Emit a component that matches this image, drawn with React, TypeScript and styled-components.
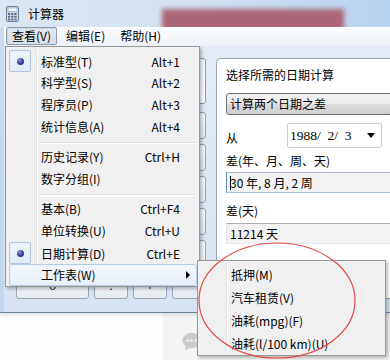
import React from "react";
import styled, { createGlobalStyle } from "styled-components";

const Global = createGlobalStyle`
  html, body { margin: 0; padding: 0; }
  body {
    background: #fcfcfc;
    font-family: "Noto Sans CJK SC", "Noto Sans", sans-serif;
    font-size: 12px;
    color: #000;
  }
`;

const Page = styled.div`
  position: relative;
  width: 390px;
  height: 360px;
  overflow: hidden;
  background: linear-gradient(to right, #fdfdfd 0, #fdfdfd 163px, #f4f4f4 163px);
`;

const Window = styled.div`
  width: 420px;
  height: 313px;
  display: flex;
  flex-direction: column;
  background: linear-gradient(#cbdcef, #c2d6ec);
  border-bottom: 1px solid #71839a;
  box-shadow: 0 2px 4px rgba(0, 0, 0, 0.12);
  box-sizing: border-box;
`;

const TitleBar = styled.div`
  position: relative;
  height: 27px;
  flex: none;
  display: flex;
  align-items: center;
  gap: 9px;
  padding-left: 6px;
  overflow: hidden;
  background: linear-gradient(to right, #dbe6f2 0%, #d3e1f0 45%, #b4d1ee 100%);
  &::before {
    content: "";
    position: absolute;
    left: 162px;
    top: 9px;
    width: 182px;
    height: 24px;
    background: #ab6576;
    filter: blur(2.5px);
  }
`;

const TitleText = styled.span`
  position: relative;
  z-index: 1;
  line-height: 16px;
`;

const IconWrap = styled.span`
  position: relative;
  z-index: 1;
  display: flex;
`;

const Body = styled.div`
  flex: 1;
  display: flex;
  flex-direction: column;
  margin-left: 4px;
`;

const MenuBar = styled.div`
  height: 19px;
  flex: none;
  display: flex;
  gap: 3px;
  padding-left: 2px;
  background: linear-gradient(#fbfcfe, #eef3f9);
  border-top: 1px solid #ffffff;
  box-sizing: border-box;
`;

const MenuBarItem = styled.div<{ $open?: boolean }>`
  height: 18px;
  padding: 0 5px;
  border: 1px solid ${(p) => (p.$open ? "#8d9db1" : "transparent")};
  border-radius: 2px;
  background: ${(p) => (p.$open ? "linear-gradient(#e4e9ef, #d8dfe8)" : "transparent")};
  box-shadow: ${(p) => (p.$open ? "inset 1px 1px 1px rgba(0,0,0,0.08)" : "none")};
  line-height: 16px;
  box-sizing: border-box;
  margin-top: -1px;
`;

const Client = styled.div`
  flex: 1;
  display: flex;
  gap: 10px;
  padding: 12px 0 13px 0;
  background: linear-gradient(#e2ebf6, #d7e3f2);
`;

const StdPanel = styled.div`
  width: 190px;
  flex: none;
  padding-left: 12px;
  display: flex;
  flex-direction: column;
  gap: 8px;
`;

const Display = styled.div`
  height: 46px;
  border: 1px solid #8e9db0;
  border-radius: 3px;
  background: linear-gradient(#f4f8fc, #ffffff);
  box-sizing: border-box;
`;

const KeyGrid = styled.div`
  display: grid;
  grid-template-columns: repeat(5, 34px);
  grid-auto-rows: 27px;
  gap: 5px;
`;

const Key = styled.div<{ $wide?: boolean; $tall?: boolean }>`
  grid-column: ${(p) => (p.$wide ? "span 2" : "auto")};
  grid-row: ${(p) => (p.$tall ? "span 2" : "auto")};
  display: flex;
  align-items: center;
  justify-content: center;
  border: 1px solid #9aa5b3;
  border-radius: 3px;
  background: linear-gradient(#f7f9fb, #e6ebf1);
  font-family: "Liberation Sans", sans-serif;
  font-size: 13px;
  color: #1a1a1a;
  box-sizing: border-box;
`;

const DatePanel = styled.div`
  flex: 1;
  border: 1px solid #9aa6b5;
  border-radius: 4px;
  background: #ffffff;
  padding: 8px 9px 0 9px;
  display: flex;
  flex-direction: column;
`;

const Label = styled.div<{ $gap?: number }>`
  line-height: 16px;
  margin-top: ${(p) => p.$gap ?? 0}px;
`;

const Combo = styled.div`
  height: 22px;
  margin-top: 10px;
  border: 1px solid #707070;
  border-radius: 3px;
  background: linear-gradient(#f3f3f3 0%, #ebebeb 50%, #dddddd 51%, #cfcfcf 100%);
  padding-left: 3px;
  line-height: 20px;
  box-sizing: border-box;
`;

const FromRow = styled.div`
  display: flex;
  align-items: flex-end;
  margin-top: 8px;
`;

const FromLabel = styled.div`
  width: 61px;
  line-height: 16px;
  margin-bottom: 2px;
`;

const DatePicker = styled.div`
  width: 95px;
  height: 25px;
  border: 1px solid #c9ccd1;
  border-radius: 2px;
  display: flex;
  align-items: center;
  justify-content: space-between;
  padding: 0 6px 0 2px;
  box-sizing: border-box;
  background: #fff;
`;

const DateText = styled.span`
  font-family: "Liberation Serif", serif;
  font-size: 13.5px;
  white-space: pre;
`;

const DropArrow = styled.span`
  width: 0;
  height: 0;
  border-left: 4px solid transparent;
  border-right: 4px solid transparent;
  border-top: 5px solid #000;
`;

const TextBox = styled.div<{ $focus?: boolean; $gap: number }>`
  height: 21px;
  margin-top: ${(p) => p.$gap}px;
  border: 1px solid;
  border-color: ${(p) =>
    p.$focus ? "#a9b8c9 #b7d0e8 #a5c8e6 #5f8fbf" : "#abadb3 #dbdfe6 #e3e9ef #e2e3ea"};
  background: #f3f3f3;
  padding-left: 3px;
  line-height: 19px;
  display: flex;
  align-items: center;
  box-sizing: border-box;
`;

const Caret = styled.span`
  display: inline-block;
  width: 1px;
  height: 14px;
  background: #000;
  margin-right: -1px;
`;

const Footer = styled.div`
  padding: 19px 0 0 182px;
  display: flex;
`;

const DropMenu = styled.div`
  position: absolute;
  left: 5px;
  top: 46px;
  width: 195px;
  height: 241px;
  box-sizing: border-box;
  border: 1px solid #979797;
  background: #f0f0f0;
  padding: 3px 2px 1px 3px;
  box-shadow: 2px 2px 3px rgba(0, 0, 0, 0.25);
  &::before {
    content: "";
    position: absolute;
    left: 30px;
    top: 2px;
    bottom: 2px;
    width: 1px;
    background: #e2e3e3;
    box-shadow: 1px 0 0 #ffffff;
  }
`;

const SubMenu = styled.div`
  position: absolute;
  left: 197px;
  top: 260px;
  width: 189px;
  height: 96px;
  box-sizing: border-box;
  border: 1px solid #979797;
  background: #f0f0f0;
  padding: 2px 2px 0 2px;
  box-shadow: 2px 2px 3px rgba(0, 0, 0, 0.25);
  &::before {
    content: "";
    position: absolute;
    left: 28px;
    top: 2px;
    bottom: 2px;
    width: 1px;
    background: #e2e3e3;
    box-shadow: 1px 0 0 #ffffff;
  }
`;

const MenuRow = styled.div<{ $hot?: boolean; $h: number; $lead: number }>`
  position: relative;
  height: ${(p) => p.$h}px;
  display: grid;
  grid-template-columns: ${(p) => p.$lead}px 1fr auto 16px;
  align-items: center;
  box-sizing: border-box;
  border: 1px solid ${(p) => (p.$hot ? "#b3cbe6" : "transparent")};
  border-radius: 3px;
  background: ${(p) => (p.$hot ? "linear-gradient(#f3f7fc, #e7eff8)" : "transparent")};
  line-height: 16px;
  z-index: 1;
`;

const Lead = styled.div`
  display: flex;
  align-items: center;
  justify-content: flex-start;
  height: 100%;
  margin-left: -1px;
`;

const CheckBox = styled.div`
  width: 22px;
  height: 22px;
  box-sizing: border-box;
  border: 1px solid #aec6e4;
  border-radius: 2px;
  background: linear-gradient(#edf3fa, #e1eaf6);
  display: flex;
  align-items: center;
  justify-content: center;
  margin-top: -1px;
`;

const Bullet = styled.div`
  width: 7px;
  height: 7px;
  border-radius: 50%;
  background: radial-gradient(circle at 35% 30%, #8b8fd8 0%, #3b3c97 55%, #1e1f5e 100%);
`;

const Shortcut = styled.span`
  text-align: right;
`;

const SubArrow = styled.span`
  justify-self: center;
  width: 0;
  height: 0;
  border-top: 4px solid transparent;
  border-bottom: 4px solid transparent;
  border-left: 4px solid #000;
`;

const Separator = styled.div`
  height: 8px;
  position: relative;
  &::after {
    content: "";
    position: absolute;
    left: 29px;
    right: 0;
    top: 4px;
    height: 1px;
    background: #e0e0e0;
    box-shadow: 0 1px 0 #ffffff;
  }
`;

const Annotation = styled.svg`
  position: absolute;
  left: 0;
  top: 0;
  pointer-events: none;
  z-index: 5;
`;

const CalcIcon = () => (
  <svg width="13" height="16" viewBox="0 0 13 16">
    <rect x="0.5" y="0.5" width="12" height="15" rx="1.5" fill="#d2dbe6" stroke="#6f8198" />
    <rect x="2" y="2" width="9" height="3.5" fill="#f6f9fc" stroke="#8e9db1" strokeWidth="0.6" />
    {[0, 1, 2].map((r) =>
      [0, 1, 2].map((c) => (
        <rect
          key={`${r}-${c}`}
          x={2 + c * 3.2}
          y={7 + r * 2.8}
          width="2.2"
          height="1.8"
          fill={r === 2 && c === 2 ? "#3d78c0" : "#56677f"}
        />
      ))
    )}
  </svg>
);

const ChatIcon = () => (
  <svg width="19" height="19" viewBox="0 0 19 19">
    <ellipse cx="9.5" cy="8.5" rx="9" ry="7.8" fill="#cacaca" />
    <path d="M4 14 L3 18.5 L8.5 15.5 Z" fill="#cacaca" />
    <circle cx="5.5" cy="8.5" r="1.3" fill="#f4f4f4" />
    <circle cx="9.5" cy="8.5" r="1.3" fill="#f4f4f4" />
    <circle cx="13.5" cy="8.5" r="1.3" fill="#f4f4f4" />
  </svg>
);

const keys: { t: string; wide?: boolean; tall?: boolean }[] = [
  "MC", "MR", "MS", "M+", "M-",
  "←", "CE", "C", "±", "√",
  "7", "8", "9", "/", "%",
  "4", "5", "6", "*", "1/x",
  "1", "2", "3", "-",
].map((t) => ({ t }));
keys.push({ t: "=", tall: true }, { t: "0", wide: true }, { t: "." }, { t: "+" });

type Item =
  | { sep: true }
  | { label: string; key?: string; checked?: boolean; hot?: boolean; sub?: boolean };

const viewItems: Item[] = [
  { label: "标准型(T)", key: "Alt+1", checked: true },
  { label: "科学型(S)", key: "Alt+2" },
  { label: "程序员(P)", key: "Alt+3" },
  { label: "统计信息(A)", key: "Alt+4" },
  { sep: true },
  { label: "历史记录(Y)", key: "Ctrl+H" },
  { label: "数字分组(I)" },
  { sep: true },
  { label: "基本(B)", key: "Ctrl+F4" },
  { label: "单位转换(U)", key: "Ctrl+U" },
  { label: "日期计算(D)", key: "Ctrl+E", checked: true },
  { label: "工作表(W)", hot: true, sub: true },
];

const sheetItems = ["抵押(M)", "汽车租赁(V)", "油耗(mpg)(F)", "油耗(l/100 km)(U)"];

export default function App() {
  return (
    <Page>
      <Global />
      <Window>
        <TitleBar>
          <IconWrap>
            <CalcIcon />
          </IconWrap>
          <TitleText>计算器</TitleText>
        </TitleBar>
        <Body>
          <MenuBar>
            <MenuBarItem $open>查看(V)</MenuBarItem>
            <MenuBarItem>编辑(E)</MenuBarItem>
            <MenuBarItem>帮助(H)</MenuBarItem>
          </MenuBar>
          <Client>
            <StdPanel>
              <Display />
              <KeyGrid>
                {keys.map((k, i) => (
                  <Key key={i} $wide={k.wide} $tall={k.tall}>
                    {k.t}
                  </Key>
                ))}
              </KeyGrid>
            </StdPanel>
            <DatePanel>
              <Label>选择所需的日期计算</Label>
              <Combo>计算两个日期之差</Combo>
              <FromRow>
                <FromLabel>从</FromLabel>
                <DatePicker>
                  <DateText>{"1988/  2/  3"}</DateText>
                  <DropArrow />
                </DatePicker>
              </FromRow>
              <Label $gap={5}>差(年、月、周、天)</Label>
              <TextBox $focus $gap={3}>
                <Caret />
                30 年, 8 月, 2 周
              </TextBox>
              <Label $gap={10}>差(天)</Label>
              <TextBox $gap={4}>11214 天</TextBox>
            </DatePanel>
          </Client>
        </Body>
      </Window>
      <Footer>
        <ChatIcon />
      </Footer>

      <DropMenu>
        {viewItems.map((it, i) =>
          "sep" in it ? (
            <Separator key={i} />
          ) : (
            <MenuRow key={i} $hot={it.hot} $h={22} $lead={31}>
              <Lead>
                {it.checked && (
                  <CheckBox>
                    <Bullet />
                  </CheckBox>
                )}
              </Lead>
              <span>{it.label}</span>
              <Shortcut>{it.key ?? ""}</Shortcut>
              {it.sub ? <SubArrow /> : <span />}
            </MenuRow>
          )
        )}
      </DropMenu>

      <SubMenu>
        {sheetItems.map((s) => (
          <MenuRow key={s} $h={23} $lead={30}>
            <Lead />
            <span>{s}</span>
            <span />
            <span />
          </MenuRow>
        ))}
      </SubMenu>

      <Annotation width="390" height="360" viewBox="0 0 390 360">
        <ellipse cx="277" cy="300.5" rx="78" ry="57.5" fill="none" stroke="#e24a44" strokeWidth="1.2" />
      </Annotation>
    </Page>
  );
}
